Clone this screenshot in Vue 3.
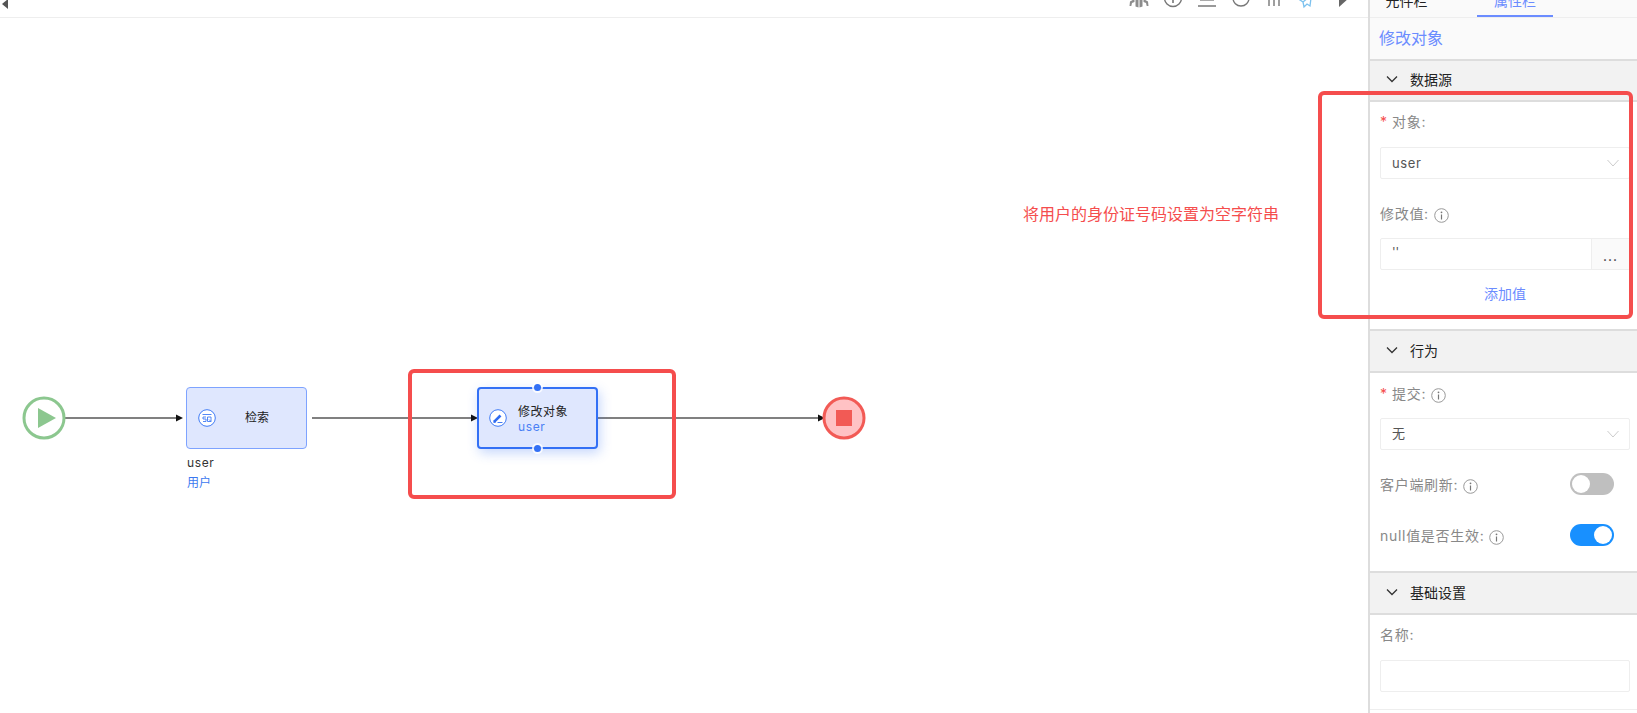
<script setup>
const infoR = 7
</script>

<template>
  <div class="root">
    <div class="left">
      <div class="toolbar">
        <svg class="back" width="10" height="14" viewBox="0 0 10 14"><path d="M8 -1 L2 4 L8 9 Z" fill="#555"/></svg>
        <div class="tools">
          <svg class="tool" width="22" height="18" viewBox="0 0 22 18"><path d="M7.500-6h3v13.500l-3-1zM11.500-6h3v12.500l-3 1zM6.500-1 2 1.500 1.500 6h1.800l.7-3 2.500-1zM15.500-1 20 1.500 20.500 6h-1.800l-.7-3-2.500-1z" fill="#8c8c8c"/></svg>
          <svg class="tool" width="22" height="18" viewBox="0 0 22 18"><circle cx="11" cy="-2" r="8.500" fill="none" stroke="#777" stroke-width="1.400"/><path d="M11-3v6" stroke="#777" stroke-width="1.600"/></svg>
          <svg class="tool" width="22" height="18" viewBox="0 0 22 18"><path d="M4 0.500h14" stroke="#aaa" stroke-width="1"/><path d="M2 6h18" stroke="#777" stroke-width="1.500"/></svg>
          <svg class="tool" width="22" height="18" viewBox="0 0 22 18"><circle cx="11" cy="-2" r="8" fill="none" stroke="#777" stroke-width="1.400"/></svg>
          <svg class="tool" width="22" height="18" viewBox="0 0 22 18"><path d="M5-2v8M10-2v8M15-2v8" stroke="#888" stroke-width="1.600"/></svg>
          <svg class="tool plane" width="22" height="18" viewBox="0 0 22 18"><path d="M3-2 9 2l1 5 3-3 3 2 1-8M9 2l6-5" fill="none" stroke="#7cc1ee" stroke-width="1.300"/></svg>
          <svg class="tool" width="22" height="18" viewBox="0 0 22 18"><path d="M7-2h10L7 7z" fill="#666"/></svg>
        </div>
      </div>
      <div class="canvas">
        <svg class="edges" width="1368" height="695" viewBox="0 18 1368 695">
          <g stroke="#808080" stroke-width="2" fill="none">
            <path d="M65 418H178"/>
            <path d="M312 418H472"/>
            <path d="M598 418H820"/>
          </g>
          <g fill="#111">
            <path d="M176 414.500 183 418 176 421.500z"/>
            <path d="M471 414.500 478 418 471 421.500z"/>
            <path d="M818 414.500 825 418 818 421.500z"/>
          </g>
          <circle cx="44" cy="418" r="20" fill="#fff" stroke="#8cc78f" stroke-width="3"/>
          <path d="M38 408 56 418 38 428z" fill="#8cc78f"/>
          <circle cx="844" cy="418" r="20" fill="#ffc2c4" stroke="#f25a55" stroke-width="3"/>
          <rect x="836" y="410" width="16" height="16" fill="#f25a55"/>
        </svg>

        <div class="node search">
          <svg class="node-icon" width="18" height="18" viewBox="0 0 18 18">
            <circle cx="9" cy="9" r="8.300" fill="#fff" stroke="#3f7bf5"/>
            <path d="M4.500 5.500h9M5 8h3v0M5 8v2h3v2.500H5M9.500 8h3.500v4.500H9.500zM11 10.500l2 2" fill="none" stroke="#3f7bf5" stroke-width=".9"/>
          </svg>
          <span class="node-title">检索</span>
        </div>
        <div class="node-meta">
          <div class="meta-name">user</div>
          <div class="meta-sub">用户</div>
        </div>

        <div class="node active">
          <svg class="node-icon" width="18" height="18" viewBox="0 0 18 18">
            <circle cx="9" cy="9" r="8.300" fill="#fff" stroke="#3f7bf5"/>
            <path d="M5.800 12.200 11.500 6.500" stroke="#2f6bf0" stroke-width="2.600" fill="none"/>
            <path d="M4.800 13.500 5 11l2 2zM8.500 13.500h5" fill="#2f6bf0" stroke="#2f6bf0" stroke-width=".9"/>
          </svg>
          <div class="node-text">
            <div class="node-name">修改对象</div>
            <div class="node-obj">user</div>
          </div>
          <i class="handle top"></i>
          <i class="handle bottom"></i>
        </div>

        <div class="note">将用户的身份证号码设置为空字符串</div>
      </div>
    </div>

    <aside class="panel">
      <div class="tabs">
        <div class="tab">元件栏</div>
        <div class="tab on">属性栏</div>
      </div>
      <div class="panel-title">修改对象</div>

      <section class="sec first">
        <header class="sec-head">
          <svg width="12" height="8" viewBox="0 0 12 8"><path d="M1 1.500 6 6.500 11 1.500" fill="none" stroke="#333" stroke-width="1.300"/></svg>
          <span>数据源</span>
        </header>
        <div class="sec-body b1">
          <label class="lab"><em>*</em>对象:</label>
          <div class="field select lower"><span>user</span>
            <svg width="12" height="8" viewBox="0 0 12 8"><path d="M.5 1 6 7 11.500 1" fill="none" stroke="#ccc"/></svg>
          </div>
          <label class="lab gap">修改值:
            <svg class="info" width="15" height="15" viewBox="0 0 15 15"><circle cx="7.500" cy="7.500" r="6.800" fill="none" stroke="#999"/><path d="M7.500 6.500v5" stroke="#777" stroke-width="1.200"/><circle cx="7.500" cy="4.300" r=".9" fill="#777"/></svg>
          </label>
          <div class="field input"><span class="val">''</span><b class="addon">...</b></div>
          <a class="add">添加值</a>
        </div>
      </section>

      <section class="sec">
        <header class="sec-head">
          <svg width="12" height="8" viewBox="0 0 12 8"><path d="M1 1.500 6 6.500 11 1.500" fill="none" stroke="#333" stroke-width="1.300"/></svg>
          <span>行为</span>
        </header>
        <div class="sec-body b2">
          <label class="lab"><em>*</em>提交:
            <svg class="info" width="15" height="15" viewBox="0 0 15 15"><circle cx="7.500" cy="7.500" r="6.800" fill="none" stroke="#999"/><path d="M7.500 6.500v5" stroke="#777" stroke-width="1.200"/><circle cx="7.500" cy="4.300" r=".9" fill="#777"/></svg>
          </label>
          <div class="field select"><span class="cjk">无</span>
            <svg width="12" height="8" viewBox="0 0 12 8"><path d="M.5 1 6 7 11.500 1" fill="none" stroke="#ccc"/></svg>
          </div>
          <div class="row r1">
            <label class="lab">客户端刷新:
              <svg class="info" width="15" height="15" viewBox="0 0 15 15"><circle cx="7.500" cy="7.500" r="6.800" fill="none" stroke="#999"/><path d="M7.500 6.500v5" stroke="#777" stroke-width="1.200"/><circle cx="7.500" cy="4.300" r=".9" fill="#777"/></svg>
            </label>
            <span class="switch"><i></i></span>
          </div>
          <div class="row r2">
            <label class="lab">null值是否生效:
              <svg class="info" width="15" height="15" viewBox="0 0 15 15"><circle cx="7.500" cy="7.500" r="6.800" fill="none" stroke="#999"/><path d="M7.500 6.500v5" stroke="#777" stroke-width="1.200"/><circle cx="7.500" cy="4.300" r=".9" fill="#777"/></svg>
            </label>
            <span class="switch on"><i></i></span>
          </div>
        </div>
      </section>

      <section class="sec">
        <header class="sec-head">
          <svg width="12" height="8" viewBox="0 0 12 8"><path d="M1 1.500 6 6.500 11 1.500" fill="none" stroke="#333" stroke-width="1.300"/></svg>
          <span>基础设置</span>
        </header>
        <div class="sec-body b3">
          <label class="lab">名称:</label>
          <div class="field lower"></div>
        </div>
      </section>
    </aside>

    <div class="mark mark-node"></div>
    <div class="mark mark-panel"></div>
  </div>
</template>

<style>
html, body { margin: 0; background: #fff; overflow: hidden; }
</style>

<style scoped>
.root {
  position: relative;
  display: flex;
  width: 1637px;
  height: 713px;
  overflow: hidden;
  font-family: Inter, "Noto Sans CJK SC", sans-serif;
  font-size: 14px;
  color: #222;
}
.left { flex: 1; min-width: 0; display: flex; flex-direction: column; }
.toolbar {
  height: 17px;
  border-bottom: 1px solid #eee;
  display: flex;
  justify-content: space-between;
  overflow: hidden;
}
.tools { display: flex; gap: 12px; padding-right: 14px; }
.tool { display: block; overflow: visible; }
.plane { margin-left: -4px; margin-right: 4px; }
.canvas { position: relative; flex: 1; }
.edges { position: absolute; left: 0; top: 0; }
.node {
  position: absolute;
  top: 369px;
  width: 121px;
  height: 62px;
  box-sizing: border-box;
  background: #dfe7fe;
  border-radius: 4px;
  display: flex;
  align-items: center;
  padding-left: 11px;
  font-size: 12px;
}
.search { left: 186px; border: 1.5px solid #7ea3ff; }
.active {
  left: 477px;
  border: 2px solid #3370f5;
  padding-left: 10px;
  box-shadow: 2px 4px 12px rgba(51, 112, 245, .28);
}
.node-title { margin-left: 16px; width: 50px; text-align: center; line-height: 15px; padding-bottom: 2px; }
.node-icon { flex: none; }
.node-text { margin-left: 11px; padding-top: 1px; line-height: 15px; }
.node-name { letter-spacing: .5px; }
.node-obj { color: #4a80f5; letter-spacing: .6px; }
.handle {
  position: absolute;
  left: 55px;
  width: 7px;
  height: 7px;
  border-radius: 50%;
  background: #3370f5;
  box-shadow: 0 0 0 2px rgba(255, 255, 255, .8);
}
.handle.top { top: -5px; }
.handle.bottom { bottom: -5px; }
.node-meta { position: absolute; left: 187px; top: 435px; font-size: 12px; line-height: 20px; }
.meta-name { letter-spacing: .6px; color: #333; }
.meta-sub { color: #3b78f0; }
.note {
  position: absolute;
  left: 1023px;
  top: 185px;
  font-size: 16px;
  line-height: 22px;
  color: #f54d4d;
  white-space: nowrap;
}

.panel { width: 269px; flex: none; box-sizing: border-box; border-left: 2px solid #ddd; }
.tabs {
  height: 17px;
  display: flex;
  overflow: hidden;
  border-bottom: 1px solid #eee;
  background: #fafafa;
}
.tab {
  box-sizing: border-box;
  height: 23px;
  margin-top: -6px;
  line-height: 14px;
  text-align: center;
  font-size: 14px;
  white-space: nowrap;
}
.tab:first-child { margin-left: 15px; margin-right: 49px; width: 43px; }
.tab.on { width: 76px; color: #6b8cff; border-bottom: 2px solid #6b8cff; }
.panel-title {
  height: 41px;
  line-height: 41px;
  padding-left: 9px;
  font-size: 16px;
  color: #6b8cff;
  background: #fafafa;
}
.sec-head {
  box-sizing: border-box;
  height: 44px;
  border-top: 2px solid #ddd;
  border-bottom: 2px solid #ddd;
  background: #f2f2f2;
  display: flex;
  align-items: center;
  padding: 0 0 3px 16px;
  gap: 12px;
  color: #222;
}
.first .sec-head { height: 43px; }
.sec-body { box-sizing: border-box; padding: 10px 7px 0 10px; }
.b1 { height: 227px; padding-top: 9px; }
.b2 { height: 198px; }
.b3 { height: 95px; padding-top: 9px; border-bottom: 1px solid #eee; }
.lab {
  display: flex;
  align-items: center;
  height: 20px;
  color: #888;
  letter-spacing: .7px;
  white-space: nowrap;
}
.lab em { color: #f54d4d; font-style: normal; width: 12px; }
.gap { margin-top: 24px; }
.info { margin-left: 5px; margin-top: 5px; flex: none; }
.field {
  box-sizing: border-box;
  height: 32px;
  margin-top: 15px;
  border: 1px solid #eee;
  border-radius: 2px;
  display: flex;
  align-items: center;
  padding-left: 11px;
  color: #555;
  font-size: 13px;
  letter-spacing: .6px;
  background: #fff;
}
.lower { margin-top: 16px; }
.select { justify-content: space-between; padding-right: 10px; }
.cjk { padding-bottom: 3px; }
.input { padding-right: 0; align-items: stretch; justify-content: space-between; }
.val { line-height: 26px; font-size: 12px; letter-spacing: 0; }
.addon {
  width: 37px;
  border-left: 1px solid #eee;
  background: #fafafa;
  text-align: center;
  font-weight: 400;
  font-size: 14px;
  letter-spacing: 1px;
  line-height: 34px;
  color: #333;
}
.add { display: block; margin-top: 14px; line-height: 20px; text-align: center; color: #6b8cff; }
.row { display: flex; align-items: center; justify-content: space-between; height: 22px; padding-right: 16px; }
.r1 { margin-top: 23px; }
.r2 { margin-top: 29px; }
.switch { position: relative; width: 44px; height: 22px; border-radius: 11px; background: #bfbfbf; }
.switch i { position: absolute; left: 2px; top: 2px; width: 18px; height: 18px; border-radius: 50%; background: #fff; }
.switch.on { background: #1890ff; }
.switch.on i { left: 24px; }

.mark { position: absolute; box-sizing: border-box; border: 4px solid #f54d4d; border-radius: 6px; pointer-events: none; }
.mark-node { left: 408px; top: 369px; width: 268px; height: 130px; }
.mark-panel { left: 1318px; top: 91px; width: 315px; height: 228px; }
</style>
